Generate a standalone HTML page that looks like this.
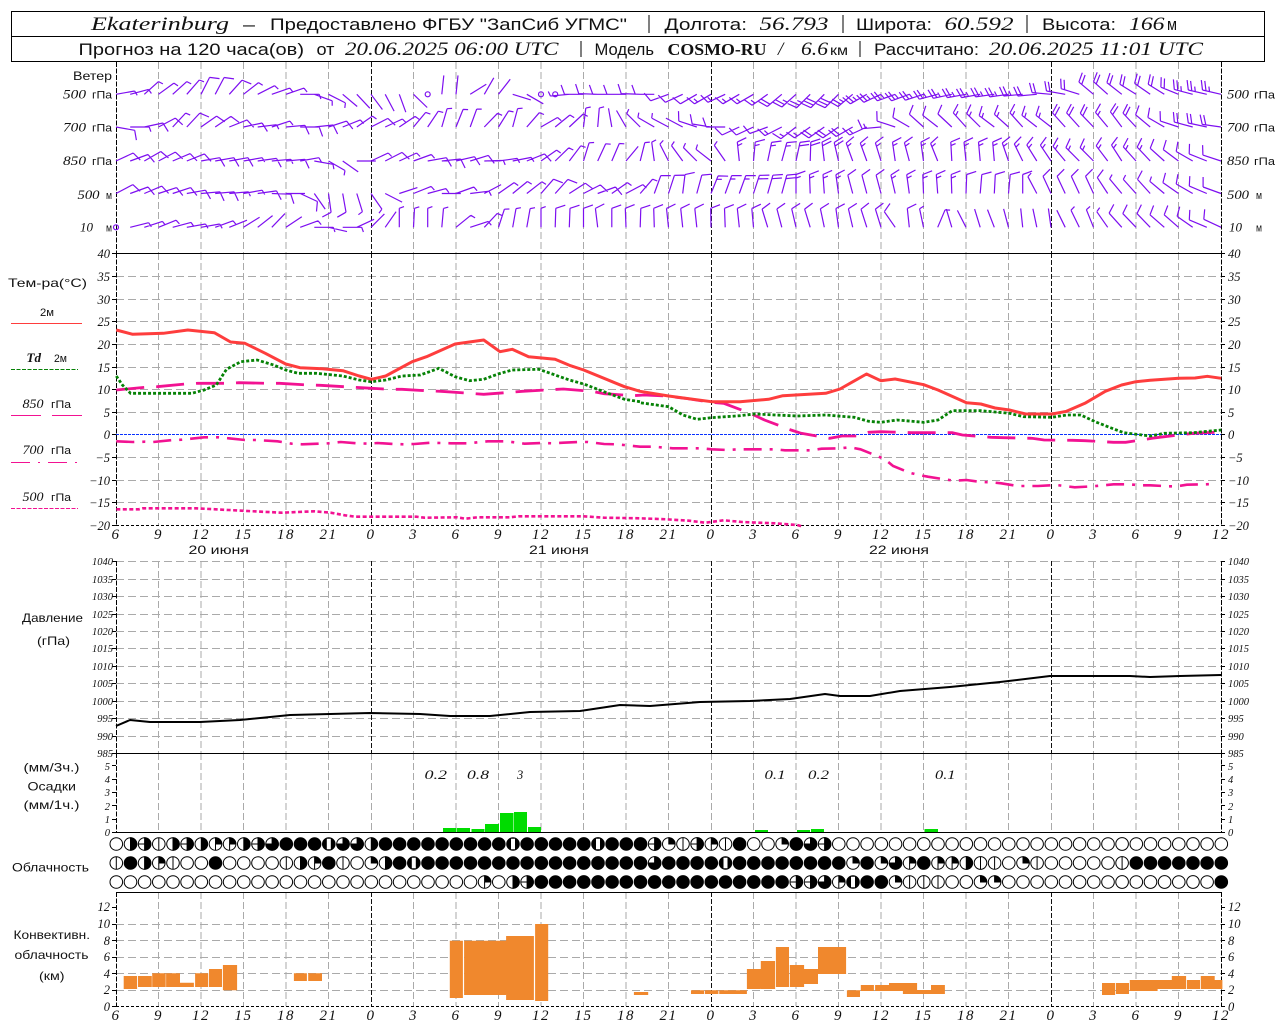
<!DOCTYPE html>
<html lang="ru"><head><meta charset="utf-8"><title>Ekaterinburg</title>
<style>
html,body{margin:0;padding:0;background:#fff;width:1280px;height:1024px;overflow:hidden}
svg{display:block}
text{fill:#111;font-family:"Liberation Sans",sans-serif}
.i{font-family:"Liberation Serif",serif;font-style:italic}
.h{font-size:17px}
.hi{font-family:"Liberation Serif",serif;font-style:italic;font-size:19px}
.l{font-size:12px}
.ti{font-family:"Liberation Serif",serif;font-style:italic;font-size:12.5px}
.tp{font-family:"Liberation Serif",serif;font-style:italic;font-size:10.5px}
.x{font-family:"Liberation Serif",serif;font-style:italic;font-size:15px;letter-spacing:1.5px;text-anchor:middle}
.e{text-anchor:end}
</style></head><body>
<svg xmlns="http://www.w3.org/2000/svg" width="1280" height="1024" viewBox="0 0 1280 1024">
<rect width="1280" height="1024" fill="#fff"/>
<g id="grid"></g>
<g id="bars"></g>
<g id="curves"></g>
<g id="barbs"></g>
<g id="cloud"></g>
<path d="M11.5 11.5H1264.5V61.5H11.5ZM11.5 36.5H1264.5" fill="none" stroke="#000" stroke-width="1" shape-rendering="crispEdges"/>
<path d="M649 15V33M843 15V33M1027 15V33M581 41V57M860 41V57" fill="none" stroke="#000" stroke-width="1" shape-rendering="crispEdges"/>
<text class="hi" x="91" y="30" textLength="138">Ekaterinburg</text>
<text class="h" x="243" y="30" textLength="12">–</text>
<text class="h" x="270" y="30" textLength="357">Предоставлено ФГБУ "ЗапСиб УГМС"</text>
<text class="h" x="664.5" y="30" textLength="82.5">Долгота:</text>
<text class="hi" x="759.5" y="30" textLength="69">56.793</text>
<text class="h" x="856" y="30" textLength="76">Широта:</text>
<text class="hi" x="944.5" y="30" textLength="69">60.592</text>
<text class="h" x="1042" y="30" textLength="74">Высота:</text>
<text class="hi" x="1129" y="30" textLength="35.5">166</text>
<text class="h" x="1167" y="30" textLength="10">м</text>
<text class="h" x="78.5" y="55" textLength="225.5">Прогноз на 120 часа(ов)</text>
<text class="h" x="316.5" y="55" textLength="18">от</text>
<text class="hi" x="345" y="55" textLength="213.5">20.06.2025 06:00 UTC</text>
<text class="h" x="594.5" y="55" textLength="59.5">Модель</text>
<text x="667.5" y="55" textLength="99" style="font-family:'Liberation Serif',serif;font-weight:bold;font-size:17px">COSMO-RU</text>
<text class="hi" x="778" y="55">/</text>
<text class="hi" x="801" y="55" textLength="27">6.6</text>
<text class="h" x="830" y="55" textLength="18" style="font-size:14px">км</text>
<text class="h" x="874" y="55" textLength="105">Рассчитано:</text>
<text class="hi" x="989" y="55" textLength="214">20.06.2025 11:01 UTC</text>

<!-- wind labels -->
<text class="l" x="73" y="80" textLength="39">Ветер</text>
<text class="ti" x="63" y="98.5" textLength="23">500</text><text class="l" x="92" y="98.5" textLength="20" style="font-size:11px">гПа</text>
<text class="ti" x="63" y="131.5" textLength="23">700</text><text class="l" x="92" y="131.5" textLength="20" style="font-size:11px">гПа</text>
<text class="ti" x="63" y="165" textLength="23">850</text><text class="l" x="92" y="165" textLength="20" style="font-size:11px">гПа</text>
<text class="ti" x="77.5" y="199" textLength="22">500</text><text class="l" x="106" y="199" textLength="6" style="font-size:11px">м</text>
<text class="ti" x="80" y="231.5" textLength="13">10</text><text class="l" x="106" y="231.5" textLength="6" style="font-size:11px">м</text>
<text class="ti" x="1227" y="98.5" textLength="22">500</text><text class="l" x="1254" y="98.5" textLength="21" style="font-size:11px">гПа</text>
<text class="ti" x="1227" y="131.5" textLength="22">700</text><text class="l" x="1254" y="131.5" textLength="21" style="font-size:11px">гПа</text>
<text class="ti" x="1227" y="165" textLength="22">850</text><text class="l" x="1254" y="165" textLength="21" style="font-size:11px">гПа</text>
<text class="ti" x="1227" y="199" textLength="22">500</text><text class="l" x="1256" y="199" textLength="6" style="font-size:11px">м</text>
<text class="ti" x="1229" y="231.5" textLength="13">10</text><text class="l" x="1256" y="231.5" textLength="6" style="font-size:11px">м</text>

<!-- legend -->
<text class="l" x="8" y="287" textLength="79">Тем-ра(°C)</text>
<text class="l" x="40" y="316" textLength="14" style="font-size:11px">2м</text>
<text class="ti" x="26.5" y="362" textLength="14.5" style="font-weight:bold">Td</text><text class="l" x="54" y="362" textLength="13" style="font-size:11px">2м</text>
<text class="ti" x="22.5" y="408" textLength="21">850</text><text class="l" x="51" y="408" textLength="20" style="font-size:11px">гПа</text>
<text class="ti" x="22.5" y="454" textLength="21">700</text><text class="l" x="51" y="454" textLength="20" style="font-size:11px">гПа</text>
<text class="ti" x="22.5" y="501" textLength="21">500</text><text class="l" x="51" y="501" textLength="20" style="font-size:11px">гПа</text>
<text class="l" x="22" y="622" textLength="61">Давление</text>
<text class="l" x="37" y="645" textLength="33">(гПа)</text>
<text class="l" x="23.5" y="771.5" textLength="56">(мм/3ч.)</text>
<text class="l" x="27.5" y="790.5" textLength="48.5">Осадки</text>
<text class="l" x="23.5" y="809" textLength="56">(мм/1ч.)</text>
<text class="l" x="12" y="871.5" textLength="77">Облачность</text>
<text class="l" x="13.5" y="939" textLength="76.5">Конвективн.</text>
<text class="l" x="14.5" y="959" textLength="74">облачность</text>
<text class="l" x="39" y="980" textLength="25.5">(км)</text>

<!-- temp ticks -->
<text class="ti e" x="110" y="258">40</text><text class="ti e" x="110" y="281">35</text><text class="ti e" x="110" y="304">30</text><text class="ti e" x="110" y="326">25</text><text class="ti e" x="110" y="349">20</text><text class="ti e" x="110" y="372">15</text><text class="ti e" x="110" y="394">10</text><text class="ti e" x="110" y="417">5</text><text class="ti e" x="110" y="439">0</text><text class="ti e" x="110" y="462">−5</text><text class="ti e" x="110" y="485">−10</text><text class="ti e" x="110" y="507">−15</text><text class="ti e" x="110" y="530">−20</text>
<text class="ti" x="1228" y="258">40</text><text class="ti" x="1228" y="281">35</text><text class="ti" x="1228" y="304">30</text><text class="ti" x="1228" y="326">25</text><text class="ti" x="1228" y="349">20</text><text class="ti" x="1228" y="372">15</text><text class="ti" x="1228" y="394">10</text><text class="ti" x="1228" y="417">5</text><text class="ti" x="1228" y="439">0</text><text class="ti" x="1228" y="462">−5</text><text class="ti" x="1228" y="485">−10</text><text class="ti" x="1228" y="507">−15</text><text class="ti" x="1228" y="530">−20</text>
<!-- x labels -->
<g>
<text class="x" x="116" y="539">6</text><text class="x" x="158.5" y="539">9</text><text class="x" x="201" y="539">12</text><text class="x" x="243.5" y="539">15</text><text class="x" x="286" y="539">18</text><text class="x" x="328.5" y="539">21</text><text class="x" x="371" y="539">0</text><text class="x" x="413.5" y="539">3</text><text class="x" x="456" y="539">6</text><text class="x" x="498.5" y="539">9</text><text class="x" x="541" y="539">12</text><text class="x" x="583.5" y="539">15</text><text class="x" x="626" y="539">18</text><text class="x" x="668.5" y="539">21</text><text class="x" x="711" y="539">0</text><text class="x" x="753.5" y="539">3</text><text class="x" x="796" y="539">6</text><text class="x" x="838.5" y="539">9</text><text class="x" x="881" y="539">12</text><text class="x" x="923.5" y="539">15</text><text class="x" x="966" y="539">18</text><text class="x" x="1008.5" y="539">21</text><text class="x" x="1051" y="539">0</text><text class="x" x="1093.5" y="539">3</text><text class="x" x="1136" y="539">6</text><text class="x" x="1178.5" y="539">9</text><text class="x" x="1221" y="539">12</text>
<text class="x" x="116" y="1020">6</text><text class="x" x="158.5" y="1020">9</text><text class="x" x="201" y="1020">12</text><text class="x" x="243.5" y="1020">15</text><text class="x" x="286" y="1020">18</text><text class="x" x="328.5" y="1020">21</text><text class="x" x="371" y="1020">0</text><text class="x" x="413.5" y="1020">3</text><text class="x" x="456" y="1020">6</text><text class="x" x="498.5" y="1020">9</text><text class="x" x="541" y="1020">12</text><text class="x" x="583.5" y="1020">15</text><text class="x" x="626" y="1020">18</text><text class="x" x="668.5" y="1020">21</text><text class="x" x="711" y="1020">0</text><text class="x" x="753.5" y="1020">3</text><text class="x" x="796" y="1020">6</text><text class="x" x="838.5" y="1020">9</text><text class="x" x="881" y="1020">12</text><text class="x" x="923.5" y="1020">15</text><text class="x" x="966" y="1020">18</text><text class="x" x="1008.5" y="1020">21</text><text class="x" x="1051" y="1020">0</text><text class="x" x="1093.5" y="1020">3</text><text class="x" x="1136" y="1020">6</text><text class="x" x="1178.5" y="1020">9</text><text class="x" x="1221" y="1020">12</text>
</g>
<text class="l" x="188.5" y="554" textLength="60.5">20 июня</text>
<text class="l" x="529" y="554" textLength="60">21 июня</text>
<text class="l" x="869" y="554" textLength="60">22 июня</text>

<!-- pressure ticks -->
<text class="tp e" x="113" y="565">1040</text><text class="tp e" x="113" y="583">1035</text><text class="tp e" x="113" y="600">1030</text><text class="tp e" x="113" y="618">1025</text><text class="tp e" x="113" y="635">1020</text><text class="tp e" x="113" y="652">1015</text><text class="tp e" x="113" y="670">1010</text><text class="tp e" x="113" y="687">1005</text><text class="tp e" x="113" y="705">1000</text><text class="tp e" x="113" y="722">995</text><text class="tp e" x="113" y="740">990</text><text class="tp e" x="113" y="757">985</text>
<text class="tp" x="1228" y="565">1040</text><text class="tp" x="1228" y="583">1035</text><text class="tp" x="1228" y="600">1030</text><text class="tp" x="1228" y="618">1025</text><text class="tp" x="1228" y="635">1020</text><text class="tp" x="1228" y="652">1015</text><text class="tp" x="1228" y="670">1010</text><text class="tp" x="1228" y="687">1005</text><text class="tp" x="1228" y="705">1000</text><text class="tp" x="1228" y="722">995</text><text class="tp" x="1228" y="740">990</text><text class="tp" x="1228" y="757">985</text>
<!-- precip ticks -->
<text class="tp e" x="110" y="770">5</text><text class="tp e" x="110" y="783">4</text><text class="tp e" x="110" y="796">3</text><text class="tp e" x="110" y="810">2</text><text class="tp e" x="110" y="823">1</text><text class="tp e" x="110" y="836">0</text>
<text class="tp" x="1228" y="770">5</text><text class="tp" x="1228" y="783">4</text><text class="tp" x="1228" y="796">3</text><text class="tp" x="1228" y="810">2</text><text class="tp" x="1228" y="823">1</text><text class="tp" x="1228" y="836">0</text>
<text class="ti" x="424.5" y="779" textLength="22.5">0.2</text><text class="ti" x="467" y="779" textLength="22">0.8</text><text class="ti" x="517" y="779">3</text><text class="ti" x="764.5" y="779" textLength="21">0.1</text><text class="ti" x="808" y="779" textLength="21">0.2</text><text class="ti" x="935" y="779" textLength="20.5">0.1</text>
<!-- conv ticks -->
<text class="ti e" x="110" y="911">12</text><text class="ti e" x="110" y="928">10</text><text class="ti e" x="110" y="945">8</text><text class="ti e" x="110" y="961">6</text><text class="ti e" x="110" y="978">4</text><text class="ti e" x="110" y="994">2</text><text class="ti e" x="110" y="1011">0</text>
<text class="ti" x="1228" y="911">12</text><text class="ti" x="1228" y="928">10</text><text class="ti" x="1228" y="945">8</text><text class="ti" x="1228" y="961">6</text><text class="ti" x="1228" y="978">4</text><text class="ti" x="1228" y="994">2</text><text class="ti" x="1228" y="1011">0</text>
</svg>
<script>
(function(){
var NS="http://www.w3.org/2000/svg";
var tl=document.querySelectorAll("text[textLength]");
for(var q=0;q<tl.length;q++)tl[q].setAttribute("lengthAdjust","spacingAndGlyphs");
function el(parent,attrs){var e=document.createElementNS(NS,"path");for(var k in attrs)e.setAttribute(k,attrs[k]);document.getElementById(parent).appendChild(e);return e;}
/* ---------- grid ---------- */
var gray=[158.5,201,243.5,286,328.5,413.5,456,498.5,541,583.5,626,668.5,753.5,796,838.5,881,923.5,966,1008.5,1093.5,1136,1178.5];
var mid=[371.5,711.5,1051.5];
var d="";
var secs=[[62,253],[253,525],[561,753],[892,1006]];
secs.forEach(function(s){gray.forEach(function(x){d+="M"+x+" "+s[0]+"V"+s[1];});});
gray.concat(mid).forEach(function(x){d+="M"+x+" 753V832";});
var hs=[276.5,299.5,321.5,344.5,367.5,389.5,412.5,457.5,480.5,502.5, 561.5,579.5,596.5,614.5,631.5,648.5,666.5,683.5,701.5,718.5,736.5, 924.5,940.5,957.5,973.5,990.5];
var dh="";hs.forEach(function(y){dh+="M116 "+y+"H1221";});
el("grid",{d:d,fill:"none",stroke:"#aaa","stroke-width":1,"stroke-dasharray":"7 3","shape-rendering":"crispEdges"});
el("grid",{d:dh,fill:"none",stroke:"#aaa","stroke-width":1,"stroke-dasharray":"8 4","shape-rendering":"crispEdges"});
var dm="";secs.forEach(function(s){mid.forEach(function(x){dm+="M"+x+" "+s[0]+"V"+s[1];});});
el("grid",{d:dm,fill:"none",stroke:"#111","stroke-width":1,"stroke-dasharray":"5 2","shape-rendering":"crispEdges"});
var da="";secs.concat([[753,832]]).forEach(function(s){[116.5,1221.5].forEach(function(x){da+="M"+x+" "+s[0]+"V"+s[1];});});
el("grid",{d:da,fill:"none",stroke:"#000","stroke-width":1.4,"stroke-dasharray":"5 1.5","shape-rendering":"crispEdges"});
el("grid",{d:"M116 253.5H1221M116 753.5H1221M116 832.5H1221M116 892.5H1221",fill:"none",stroke:"#000","stroke-width":1,"shape-rendering":"crispEdges"});
el("grid",{d:"M116 525.5H1221M116 1006.5H1221",fill:"none",stroke:"#000","stroke-width":1,"stroke-dasharray":"3 2","shape-rendering":"crispEdges"});
el("grid",{d:"M116 434.5H1221",fill:"none",stroke:"#0a32ff","stroke-width":1,"stroke-dasharray":"3 1","shape-rendering":"crispEdges"});
var t="";
[253.5,276.5,299.5,321.5,344.5,367.5,389.5,412.5,434.5,457.5,480.5,502.5,525.5,561.5,579.5,596.5,614.5,631.5,648.5,666.5,683.5,701.5,718.5,736.5,753.5,765.5,779.5,792.5,805.5,819.5,832.5,907.5,924.5,940.5,957.5,973.5,990.5,1006.5].forEach(function(y){t+="M112 "+y+"H116M1221 "+y+"H1225";});
el("grid",{d:t,fill:"none",stroke:"#000","stroke-width":1,"shape-rendering":"crispEdges"});
/* ---------- bars ---------- */
var pr=[[443,456.5,828],[457,470,828],[471.5,484.5,829],[485,499,824],[500,513.5,813],[514,527,812],[528,541,827],[755,768,830],[797,810,830],[811,824,829],[924.5,938,829]];
var dp="";pr.forEach(function(b){dp+="M"+b[0]+" "+b[2]+"H"+b[1]+"V832H"+b[0]+"Z";});
el("bars",{d:dp,fill:"#00dc00"});
var oL=[[303,336,678,717],[338,372,678,711],[373,406,670,711],[407,441,670,711],[441,475,698,711],[478,510,670,711],[512,544,657,711],[546,581,645,721],[720,752,670,693],[755,789,670,693],[1102,1134,572,744],[1137,1171,572,735],[1171,1205,572,735],[1205,1240,572,735],[1240,1274,558,750],[1274,1308,558,750],[1311,1343,522,753],[1553,1568,726,735]];
var oR=[[0,20,726,735],[125,157,721,732],[159,192,721,732],[194,228,721,732],[228,262,721,732],[262,296,657,717],[296,331,633,717],[333,365,591,711],[367,402,645,711],[402,436,657,702],[436,470,591,672],[470,505,591,672],[507,539,721,741],[541,573,705,723],[576,610,705,723],[610,644,699,723],[644,679,699,732],[679,713,720,732],[713,747,705,732],[1132,1164,699,735],[1166,1198,699,732],[1200,1234,690,723],[1234,1268,690,723],[1268,1303,690,717],[1303,1338,678,717],[1340,1372,690,717],[1374,1408,678,717],[1408,1427,690,717]];
var dO="";
function ob(b,o){var a=o+b[0]/2.45,c=o+b[1]/2.45,e=750+b[2]/3,f=750+b[3]/3;dO+="M"+a.toFixed(1)+" "+e.toFixed(1)+"H"+c.toFixed(1)+"V"+f.toFixed(1)+"H"+a.toFixed(1)+"Z";}
oL.forEach(function(b){ob(b,0);});oR.forEach(function(b){ob(b,640);});
el("bars",{d:dO,fill:"#f0882d"});
/* ---------- curves ---------- */
function P(l,r){var s="",i;for(i=0;i<l.length;i+=2)s+=(s?"L":"M")+(l[i]/2.45).toFixed(1)+" "+(250+l[i+1]/3).toFixed(1);for(i=0;i<r.length;i+=2)s+="L"+(640+r[i]/2.45).toFixed(1)+" "+(250+r[i+1]/3).toFixed(1);return s;}
var pink="#f21292";
/* 500 */
el("curves",{d:P([285,778,340,778,350,775,480,775,560,780,640,785,690,788,770,784,810,788,845,796,870,800,1020,800,1040,803,1120,802,1140,806,1170,802,1250,802,1270,799,1430,799,1480,803,1568,805],[0,805,65,808,120,812,160,818,205,811,250,816,330,820,385,825,400,830]),fill:"none",stroke:pink,"stroke-width":2.6,"stroke-dasharray":"4 2.5"});
/* 700 */
el("curves",{d:P([285,574,325,576,355,575,375,576,425,570,445,569,500,562,535,562,560,565,600,570,625,570,680,574,715,581,740,583,780,581,805,580,835,576,875,580,905,581,925,579,965,582,990,583,1015,582,1055,578,1080,579,1105,580,1150,580,1170,577,1195,574,1240,574,1260,577,1285,581,1330,579,1355,580,1380,578,1420,576,1440,576,1480,582,1510,583,1535,586,1568,590],[0,590,35,590,60,593,80,595,125,595,150,595,175,598,215,600,240,598,262,598,310,598,330,598,355,601,400,601,420,601,445,596,490,595,515,592,540,598,575,615,600,628,620,648,660,668,680,674,705,680,745,688,770,692,800,690,835,696,860,697,885,700,925,708,950,708,975,708,1020,705,1045,709,1065,712,1110,709,1135,706,1160,703,1200,703,1225,706,1250,706,1295,709,1315,709,1340,704,1385,703,1408,702]),fill:"none",stroke:pink,"stroke-width":2.6,"stroke-dasharray":"18 8 3 8"});
/* 850 */
el("curves",{d:P([285,420,355,412,385,410,455,402,485,400,555,400,585,398,655,400,685,400,755,405,785,406,855,411,885,413,955,418,985,418,1055,423,1080,424,1150,430,1185,433,1250,427,1280,424,1350,419,1380,417,1450,424,1480,431,1550,437],[10,435,65,438,110,445,175,457,205,460,270,490,305,510,370,540,395,550,465,565,495,558,530,558,560,547,590,545,665,548,690,548,765,548,790,555,860,562,890,563,960,565,990,570,1060,571,1090,572,1160,577,1190,577,1255,565,1285,560,1355,550,1424,546]),fill:"none",stroke:pink,"stroke-width":2.8,"stroke-dasharray":"28 12"});
/* Td */
el("curves",{d:P([285,378,300,405,320,430,470,430,500,420,530,405,555,358,590,335,630,330,670,345,700,360,730,370,775,370,840,378,880,390,910,395,945,390,985,378,1030,375,1075,355,1115,380,1150,392,1185,388,1220,372,1255,360,1320,358,1395,390,1430,402,1490,430,1530,448,1568,455],[0,458,70,470,105,495,140,508,175,503,245,497,280,492,385,498,455,495,525,502,560,514,590,517,630,510,695,517,730,510,765,482,835,482,905,490,940,500,1010,502,1045,495,1080,495,1115,515,1150,532,1185,548,1250,558,1285,550,1355,548,1424,540]),fill:"none",stroke:"#068206","stroke-width":2.8,"stroke-dasharray":"3 2"});
/* T2m */
el("curves",{d:P([285,240,325,253,400,250,460,240,525,248,565,276,600,280,650,310,700,342,735,353,790,356,840,362,880,378,910,388,945,378,1010,335,1045,320,1115,282,1185,270,1225,305,1255,298,1295,320,1360,328,1395,346,1430,360,1500,395,1530,410,1568,424],[0,424,70,438,175,455,245,455,315,448,350,437,455,430,490,417,555,372,590,392,625,387,695,404,730,420,800,458,835,462,870,474,905,480,945,492,1010,492,1045,484,1090,460,1140,424,1180,405,1215,395,1250,391,1320,385,1360,384,1390,379,1424,385]),fill:"none",stroke:"#fe3d3d","stroke-width":3,"stroke-linejoin":"round"});
/* pressure */
el("curves",{d:"M116 726L130 720L150 722L175 722L200 722L240 720L290 715L370 713L420 714L450 716L490 716L530 712L580 711L620 705L650 706L700 702L750 701L790 699L825 694L840 696L870 696L900 691L950 687L1000 682L1050 676L1065 676L1130 676L1150 677L1180 676L1221 675",fill:"none",stroke:"#000","stroke-width":2,"stroke-linejoin":"round"});
/* legend lines */
el("curves",{d:"M11 369.5H78",fill:"none",stroke:"#068206","stroke-width":1,"stroke-dasharray":"4 1.5","shape-rendering":"crispEdges"});
el("curves",{d:"M11 462.5H30M38 462.5H40M48 462.5H67M75 462.5H77",fill:"none",stroke:pink,"stroke-width":1,"shape-rendering":"crispEdges"});
el("curves",{d:"M11 508.5H78",fill:"none",stroke:pink,"stroke-width":1,"stroke-dasharray":"4 1.5","shape-rendering":"crispEdges"});
el("curves",{d:"M11 323.5H82",fill:"none",stroke:"#fe3d3d","stroke-width":1,"shape-rendering":"crispEdges"});
el("curves",{d:"M11 415.5H41M52 415.5H82",fill:"none",stroke:pink,"stroke-width":1,"shape-rendering":"crispEdges"});
/* ---------- wind barbs ---------- */
var rows=[
[94.3,"80.1 75.1 48.1 54.1 48.1 41.1 27.2 28.2 42.2 52.1 63.1 71.1 71.1 90.1 110.1 117.1 130.0 137.0 143.0 152.0 160.0 134.0 c 6.0 6.0 58.0 30.0 38.0 107.0 120.0 c c 265.1 270.2 272.2 270.2 270.2 272.2 270.2 250.2 245.2 240.2 240.3 245.3 240.3 240.3 235.3 230.4 228.5 225.5 225.6 225.6 230.5 240.5 245.5 250.5 250.5 252.5 255.5 258.5 260.5 260.5 262.5 262.5 265.5 265.4 275.4 280.4 287.4 310.4 312.4 308.4 302.4 305.4 302.4 292.4 285.5 283.5 283.5"],
[127,"100.2 90.1 78.2 62.2 43.1 43.2 55.2 56.2 68.2 78.2 83.1 72.1 85.2 90.2 84.2 72.2 68.1 55.1 63.2 65.1 56.1 40.1 34.1 16.1 22.1 20.1 44.1 32.1 15.1 41.1 60.1 51.1 47.1 7.1 5.1 350.0 330.0 315.1 300.1 298.1 298.0 288.2 279.2 270.2 245.2 245.2 250.2 243.3 232.3 235.3 235.4 235.4 240.4 245.3 265.3 288.2 300.2 312.2 308.2 313.2 318.3 315.3 307.3 312.3 318.3 308.3 308.3 318.4 318.4 316.4 320.3 323.4 317.4 310.2 300.2 288.2 285.4 282.4 278.4"],
[161,"65.2 70.2 60.2 62.2 67.2 68.2 80.2 80.2 80.2 80.1 82.2 85.1 85.2 80.1 100.1 120.1 125.0 90.0 65.1 63.2 65.1 70.1 80.2 84.2 77.2 73.2 88.1 82.1 79.1 68.2 55.1 46.1 37.1 17.1 25.1 23.1 40.0 14.1 352.1 333.1 324.1 315.1 308.1 325.1 354.3 5.3 12.3 15.3 12.4 2.4 353.4 347.4 340.3 340.3 343.3 352.3 345.3 352.3 338.3 357.3 354.3 355.3 355.3 341.3 334.3 328.3 326.3 320.3 315.3 315.3 323.3 327.3 318.3 317.3 312.2 307.2 300.2 292.2 288.2"],
[193.5,"62.2 70.2 67.2 72.2 72.2 80.2 85.2 85.2 85.1 80.1 82.2 92.2 90.0 115.2 145.0 172.2 170.2 163.1 145.1 117.0 72.0 68.1 75.1 90.0 70.1 83.1 62.0 55.1 51.1 52.1 41.2 42.2 57.2 63.2 70.2 55.1 62.1 41.1 20.2 18.2 7.2 15.2 22.3 20.3 20.3 18.4 16.4 15.4 0.3 358.3 356.3 352.3 345.2 345.2 345.2 347.3 352.3 358.3 356.3 358.3 2.2 5.2 3.2 5.2 0.2 332.1 335.2 335.2 335.2 335.2 327.2 320.1 318.1 318.2 310.1 305.2 300.2 293.2 290.2"],
[227.3,"c 76.1 72.1 68.1 75.1 80.1 80.1 70.1 68.0 58.0 52.0 44.0 56.0 70.1 90.1 103.0 90.1 65.0 45.0 35.0 0.1 3.1 0.1 5.1 51.1 72.1 43.1 18.1 10.1 10.1 0.1 2.2 2.2 0.2 353.2 0.2 358.2 2.2 358.2 354.2 354.2 354.2 359.2 358.2 354.2 355.2 343.2 345.2 347.2 343.2 348.2 352.2 347.2 342.2 343.2 325.2 354.2 348.1 23.1 343.0 333.0 343.0 339.0 345.0 354.0 348.0 352.0 334.0 334.1 338.1 325.1 318.2 316.2 316.2 311.2 311.2 305.2 293.2 295.2"]
];
var R=Math.PI/180,db="";
function f1(v){return v.toFixed(1);}
rows.forEach(function(r){
  r[1].split(" ").forEach(function(tok,i){
    var X=116+14.1667*i,Y=r[0];
    if(tok=="c"){db+="M"+f1(X-2.5)+" "+f1(Y)+"a2.5 2.5 0 1 0 5 0a2.5 2.5 0 1 0 -5 0";return;}
    var p=tok.split("."),a=+p[0],u=+p[1],L=19;
    var dx=Math.sin(a*R),dy=-Math.cos(a*R);
    var tx=X+L*dx,ty=Y+L*dy;
    db+="M"+f1(X)+" "+f1(Y)+"L"+f1(tx)+" "+f1(ty);
    var fx=Math.sin((a+70)*R),fy=-Math.cos((a+70)*R),px=tx,py=ty;
    while(u>=2){db+="M"+f1(px)+" "+f1(py)+"l"+f1(10*fx)+" "+f1(10*fy);px-=3.6*dx;py-=3.6*dy;u-=2;}
    if(u==1){db+="M"+f1(px)+" "+f1(py)+"l"+f1(5*fx)+" "+f1(5*fy);}
  });
});
el("barbs",{d:db,fill:"none",stroke:"#7d0ff0","stroke-width":1.2});
/* ---------- cloud octas ---------- */
var cl=[[844,"0451454334"+"5688876648"+"8888888878"+"8888788852"+"1531800286"+"5000000000"+"0000000000"+"000000000"],
[863,"1843100800"+"0014381024"+"8788888888"+"8888888868"+"8887888888"+"8828263833"+"4110210000"+"018888888"],
[882,"0000000000"+"0000000000"+"0000003045"+"8888888888"+"8888888855"+"6378821110"+"0220000000"+"000000008"]];
var r=6.3,dk="",dl="",dw="",dc="";
cl.forEach(function(c){
  var y=c[0];
  c[1].split("").forEach(function(ch,i){
    var x=116.3+14.1667*i,n=+ch;
    var xs=f1(x),ys=f1(y),T=f1(y-r),B=f1(y+r);
    if(n==8||n==7){dk+="M"+f1(x-r)+" "+ys+"a"+r+" "+r+" 0 1 0 "+(2*r)+" 0a"+r+" "+r+" 0 1 0 "+(-2*r)+" 0Z";}
    else{dc+="M"+f1(x-r)+" "+ys+"a"+r+" "+r+" 0 1 0 "+(2*r)+" 0a"+r+" "+r+" 0 1 0 "+(-2*r)+" 0Z";}
    if(n==1)dl+="M"+xs+" "+T+"V"+B;
    if(n==2||n==3)dk+="M"+xs+" "+ys+"L"+xs+" "+T+"A"+r+" "+r+" 0 0 1 "+f1(x+r)+" "+ys+"Z";
    if(n==3)dl+="M"+xs+" "+ys+"V"+B;
    if(n==4||n==5)dk+="M"+xs+" "+T+"A"+r+" "+r+" 0 0 1 "+xs+" "+B+"Z";
    if(n==5)dl+="M"+f1(x-r)+" "+ys+"H"+xs;
    if(n==6)dk+="M"+xs+" "+ys+"L"+xs+" "+T+"A"+r+" "+r+" 0 1 1 "+f1(x-r)+" "+ys+"Z";
    if(n==7)dw+="M"+f1(x-2)+" "+f1(y-r+1)+"H"+f1(x+2)+"V"+f1(y+r-1)+"H"+f1(x-2)+"Z";
  });
});
el("cloud",{d:dc,fill:"#fff",stroke:"#000","stroke-width":1});
el("cloud",{d:dk,fill:"#000",stroke:"#000","stroke-width":1});
el("cloud",{d:dw,fill:"#fff"});
el("cloud",{d:dl,fill:"none",stroke:"#000","stroke-width":1});
})();
</script>
</body></html>
